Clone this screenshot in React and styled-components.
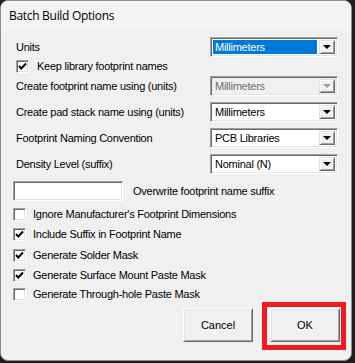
import styled, { createGlobalStyle } from "styled-components"

const GlobalStyle = createGlobalStyle`
  body {
    margin: 0;
    background: #1f1f1f;
    font-family: "Liberation Sans", Arial, sans-serif;
  }
`

const Window = styled.div`
  width: 350px;
  height: 359px;
  border: 1px solid #8f8f8f;
  border-radius: 8px;
  background: #f0f0f0;
  overflow: hidden;
  display: flex;
  flex-direction: column;
`

const TitleBar = styled.div`
  height: 29px;
  flex-shrink: 0;
  background: #f3f3f3;
  padding-left: 8px;
  display: flex;
  align-items: center;
  font-family: "Open Sans", "Noto Sans", sans-serif;
  font-size: 12px;
  letter-spacing: -0.3px;
  color: #000;
`

const Content = styled.div`
  display: flex;
  flex-direction: column;
`

const Row = styled.div`
  display: flex;
  align-items: center;
  height: ${(p) => p.$h || 20}px;
  margin-top: ${(p) => p.$mt || 0}px;
  padding-left: ${(p) => p.$pl || 15}px;
  font-size: 11px;
  letter-spacing: -0.25px;
  color: #000;
`

const Label = styled.div`
  width: 194px;
  flex-shrink: 0;
  white-space: nowrap;
`

const sunken = `
  border-style: solid;
  border-width: 1px;
  border-color: #a0a0a0 #ffffff #ffffff #a0a0a0;
  box-shadow: inset 1px 1px 0 #696969, inset -1px -1px 0 #e3e3e3;
`

const SelectBox = styled.div`
  ${sunken}
  box-sizing: border-box;
  width: 128px;
  height: 20px;
  padding: 2px;
  display: flex;
  align-items: stretch;
  gap: 2px;
  background: ${(p) => (p.$disabled ? "#f0f0f0" : "#fff")};
`

const SelectValue = styled.div`
  flex: 1;
  display: flex;
  align-items: center;
  padding-left: 2px;
  background: ${(p) => (p.$active ? "#0078d7" : "transparent")};
  color: ${(p) => (p.$active ? "#fff" : p.$disabled ? "#6d6d6d" : "#000")};
`

const DropButton = styled.div`
  width: 16px;
  background: #f0f0f0;
  box-sizing: border-box;
  border-style: solid;
  border-width: 1px;
  border-color: #e3e3e3 #696969 #696969 #e3e3e3;
  box-shadow: inset 1px 1px 0 #ffffff, inset -1px -1px 0 #a0a0a0;
  display: flex;
  align-items: center;
  justify-content: center;
`

const Arrow = styled.div`
  width: 0;
  height: 0;
  border-left: 4px solid transparent;
  border-right: 4px solid transparent;
  border-top: 4px solid ${(p) => (p.$disabled ? "#a0a0a0" : "#000")};
`

const CheckSquare = styled.div`
  ${sunken}
  box-sizing: border-box;
  width: 13px;
  height: 13px;
  flex-shrink: 0;
  background: #fff;
  display: flex;
  align-items: center;
  justify-content: center;
  margin-right: ${(p) => p.$gap || 7}px;
`

const TextField = styled.div`
  ${sunken}
  box-sizing: border-box;
  width: 110px;
  height: 20px;
  background: #fff;
  margin-right: 10px;
`

const Footer = styled.div`
  display: flex;
  justify-content: flex-end;
  align-items: flex-start;
  gap: 9px;
  margin-top: 1px;
  padding-right: 5px;
`

const Button = styled.div`
  box-sizing: border-box;
  width: 70px;
  height: 34px;
  margin-top: ${(p) => p.$mt || 0}px;
  background: #f0f0f0;
  border-style: solid;
  border-width: 1px;
  border-color: #ffffff #696969 #696969 #ffffff;
  box-shadow: inset 1px 1px 0 #e3e3e3, inset -1px -1px 0 #a0a0a0;
  display: flex;
  align-items: center;
  justify-content: center;
  font-size: 11px;
  color: #000;
`

const Highlight = styled.div`
  border: 5px solid #ec1c24;
  padding: 1px 1px 3px 3px;
`

function Select({ value, active, disabled }) {
  return (
    <SelectBox $disabled={disabled}>
      <SelectValue $active={active} $disabled={disabled}>
        {value}
      </SelectValue>
      <DropButton>
        <Arrow $disabled={disabled} />
      </DropButton>
    </SelectBox>
  )
}

function Check({ checked, gap }) {
  return (
    <CheckSquare $gap={gap}>
      {checked && (
        <svg width="9" height="9" viewBox="0 0 9 9">
          <polyline points="1,4 3.3,6.5 8,1.5" fill="none" stroke="#000" strokeWidth="2" />
        </svg>
      )}
    </CheckSquare>
  )
}

const bottomChecks = [
  { text: "Ignore Manufacturer's Footprint Dimensions", checked: false, mt: 6 },
  { text: "Include Suffix in Footprint Name", checked: true, mt: 6 },
  { text: "Generate Solder Mask", checked: true, mt: 7 },
  { text: "Generate Surface Mount Paste Mask", checked: true, mt: 6 },
  { text: "Generate Through-hole Paste Mask", checked: false, mt: 5 },
]

export default function App() {
  return (
    <>
      <GlobalStyle />
      <Window>
        <TitleBar>Batch Build Options</TitleBar>
        <Content>
          <Row $mt={7}>
            <Label>Units</Label>
            <Select value="Millimeters" active />
          </Row>
          <Row $mt={2} $h={14}>
            <Check checked gap={8} />
            Keep library footprint names
          </Row>
          <Row $mt={3}>
            <Label>Create footprint name using (units)</Label>
            <Select value="Millimeters" disabled />
          </Row>
          <Row $mt={6}>
            <Label>Create pad stack name using (units)</Label>
            <Select value="Millimeters" />
          </Row>
          <Row $mt={6}>
            <Label>Footprint Naming Convention</Label>
            <Select value="PCB Libraries" />
          </Row>
          <Row $mt={6}>
            <Label>Density Level (suffix)</Label>
            <Select value="Nominal (N)" />
          </Row>
          <Row $mt={7} $pl={12}>
            <TextField />
            Overwrite footprint name suffix
          </Row>
          {bottomChecks.map((c) => (
            <Row key={c.text} $mt={c.mt} $h={14} $pl={12}>
              <Check checked={c.checked} />
              {c.text}
            </Row>
          ))}
          <Footer>
            <Button $mt={6}>Cancel</Button>
            <Highlight>
              <Button>OK</Button>
            </Highlight>
          </Footer>
        </Content>
      </Window>
    </>
  )
}
